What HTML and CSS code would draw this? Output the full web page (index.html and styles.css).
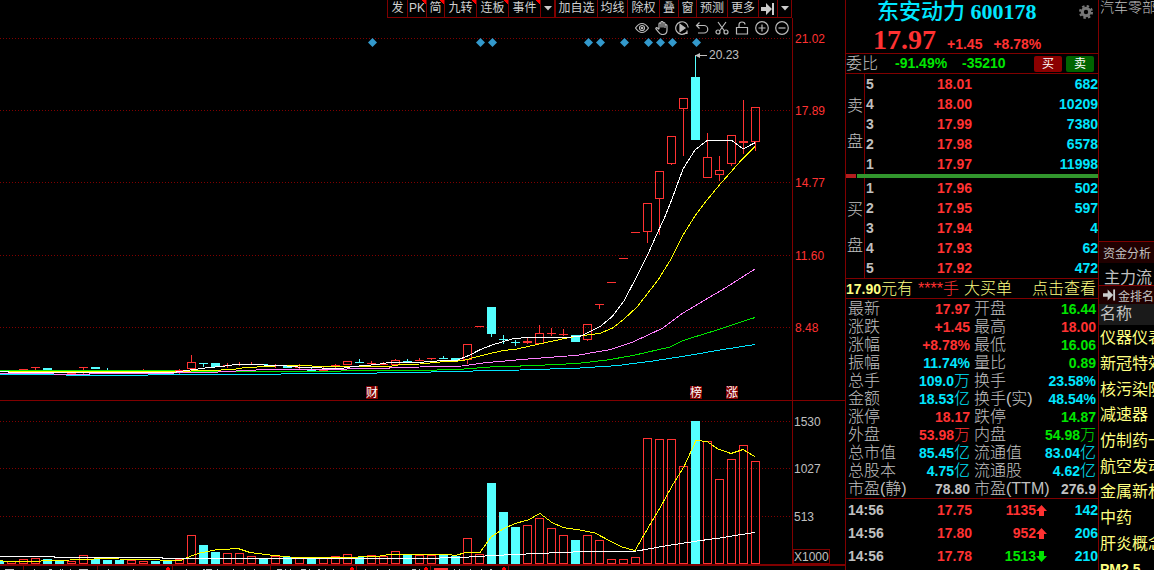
FILE: index.html
```html
<!DOCTYPE html>
<html lang="zh-CN">
<head>
<meta charset="utf-8">
<title>东安动力 600178</title>
<link rel="stylesheet" href="styles.css">
</head>
<body>
<main class="app">
  <section class="chart">
    <nav class="toolbar">
      <button>发</button><button class="hot">PK</button><button class="hot">简</button><button class="hot">九转</button><button class="hot">连板</button><button class="hot">事件</button><button aria-label="事件菜单"><svg width="8" height="5" viewBox="0 0 8 5"><path d="M0 0h8L4 4.500z" fill="#ccc"/></svg></button><button class="group">加自选</button><button>均线</button><button>除权</button><button>叠</button><button>窗</button><button>预测</button><button>更多</button><button aria-label="收起"><svg width="14" height="12" viewBox="0 0 14 12" fill="#ccc"><path d="M0 4h5V0l6 6-6 6V8H0z"/><path d="M11 0h2v12h-2z"/></svg></button><button aria-label="菜单"><svg width="8" height="5" viewBox="0 0 8 5"><path d="M0 0h8L4 4.500z" fill="#ccc"/></svg></button>
    </nav>
    <div class="tools">
      <button aria-label="显示"><svg viewBox="0 0 14 14"><path d="M.5 7Q3.500 2.500 7 2.500T13.500 7Q10.500 11.500 7 11.500T.5 7z"/><circle cx="7" cy="7" r="2.500"/><circle cx="7" cy="7" r=".6"/></svg></button>
      <button aria-label="拖动"><svg viewBox="0 0 14 14"><path d="M4 8V3q0-1.200 1-1.200t1 1.200V6.500V1.700q0-1.200 1-1.200t1 1.200V6.500V2.700q0-1.200 1-1.200t1 1.200V7V4.700q0-1 1-1t1 1V9q0 4.500-4.500 4.500Q5 13.500 3.500 11L1 8q-.5-1 .5-1.400Q2.500 6.500 4 8.500"/></svg></button>
      <button aria-label="播放"><svg viewBox="0 0 14 14"><path d="M11.500 11.500A6.300 6.300 0 1 1 13.300 6.500M8.500 12.500h3.500V9.500"/><path d="M5 3.500v7L10 7z" fill="#bbb"/></svg></button>
      <button aria-label="撤销"><svg viewBox="0 0 14 14"><path d="M4.500 1.500l-3 3 3 3M1.500 4.500H9a3.700 3.700 0 0 1 0 7.500H3"/></svg></button>
      <button aria-label="剪切"><svg viewBox="0 0 14 14"><path d="M3 1l6.500 9M11 1L4.500 10"/><circle cx="3" cy="11" r="2"/><circle cx="11" cy="11" r="2"/></svg></button>
      <button aria-label="锁定"><svg viewBox="0 0 14 14"><path d="M1.500 6.500h11v6.500h-11zM4 6.500V4q0-3 3-3t3 2.500"/></svg></button>
      <button aria-label="放大"><svg viewBox="0 0 14 14"><circle cx="7" cy="7" r="6.300"/><path d="M3.500 7h7M7 3.500v7"/></svg></button>
      <button aria-label="缩小"><svg viewBox="0 0 14 14"><circle cx="7" cy="7" r="6.300"/><path d="M3.500 7h7"/></svg></button>
    </div>
    <svg class="plot" id="plot" viewBox="0 38 845 532" role="img" aria-label="日K线与成交量"></svg>
  </section>

  <section class="quote">
    <header class="head">
      <h1>东安动力 <span>600178</span></h1>
      <button class="gear" aria-label="设置"><svg width="14" height="14" viewBox="0 0 14 14"><circle cx="7" cy="7" r="3.700" fill="none" stroke="#777" stroke-width="3"/><circle cx="7" cy="7" r="5.900" fill="none" stroke="#777" stroke-width="2.200" stroke-dasharray="2.400 2.234"/></svg></button>
      <p class="price"><strong>17.97</strong><span>+1.45</span><span>+8.78%</span></p>
    </header>
    <div class="ratio"><span class="zh">委比</span><b class="down">-91.49%</b><b class="down">-35210</b><button class="buy">买</button><button class="sell">卖</button></div>
    <div class="book">
      <div class="side"><span>卖</span><span>盘</span></div>
      <table>
        <tr><th>5</th><td>18.01</td><td>682</td></tr>
        <tr><th>4</th><td>18.00</td><td>10209</td></tr>
        <tr><th>3</th><td>17.99</td><td>7380</td></tr>
        <tr><th>2</th><td>17.98</td><td>6578</td></tr>
        <tr><th>1</th><td>17.97</td><td>11998</td></tr>
      </table>
    </div>
    <div class="balance"><i></i></div>
    <div class="book">
      <div class="side"><span>买</span><span>盘</span></div>
      <table>
        <tr><th>1</th><td>17.96</td><td>502</td></tr>
        <tr><th>2</th><td>17.95</td><td>597</td></tr>
        <tr><th>3</th><td>17.94</td><td>4</td></tr>
        <tr><th>4</th><td>17.93</td><td>62</td></tr>
        <tr><th>5</th><td>17.92</td><td>472</td></tr>
      </table>
    </div>
    <div class="notice"><span><b>17.90</b>元有</span><span class="up">****手</span><span>大买单</span><a href="#">点击查看</a></div>
    <dl class="stats">
      <dt>最新</dt><dd class="up">17.97</dd><dt>开盘</dt><dd class="down">16.44</dd>
      <dt>涨跌</dt><dd class="up">+1.45</dd><dt>最高</dt><dd class="up">18.00</dd>
      <dt>涨幅</dt><dd class="up">+8.78%</dd><dt>最低</dt><dd class="down">16.06</dd>
      <dt>振幅</dt><dd class="vol">11.74%</dd><dt>量比</dt><dd class="down">0.89</dd>
      <dt>总手</dt><dd class="vol">109.0<i>万</i></dd><dt>换手</dt><dd class="vol">23.58%</dd>
      <dt>金额</dt><dd class="vol">18.53<i>亿</i></dd><dt>换手(实)</dt><dd class="vol">48.54%</dd>
      <dt>涨停</dt><dd class="up">18.17</dd><dt>跌停</dt><dd class="down">14.87</dd>
      <dt>外盘</dt><dd class="up">53.98<i>万</i></dd><dt>内盘</dt><dd class="down">54.98<i>万</i></dd>
      <dt>总市值</dt><dd class="vol">85.45<i>亿</i></dd><dt>流通值</dt><dd class="vol">83.04<i>亿</i></dd>
      <dt>总股本</dt><dd class="vol">4.75<i>亿</i></dd><dt>流通股</dt><dd class="vol">4.62<i>亿</i></dd>
      <dt>市盈(静)</dt><dd>78.80</dd><dt>市盈(TTM)</dt><dd>276.9</dd>
    </dl>
    <table class="ticks">
      <tr><td>14:56</td><td class="up">17.75</td><td class="up">1135<svg width="11" height="11" viewBox="0 0 11 11"><path d="M5.500 0L11 6H8v5H3V6H0z" fill="#ff3232"/></svg></td><td class="vol">142</td></tr>
      <tr><td>14:56</td><td class="up">17.80</td><td class="up">952<svg width="11" height="11" viewBox="0 0 11 11"><path d="M5.500 0L11 6H8v5H3V6H0z" fill="#ff3232"/></svg></td><td class="vol">206</td></tr>
      <tr><td>14:56</td><td class="up">17.78</td><td class="down">1513<svg width="11" height="11" viewBox="0 0 11 11"><path d="M5.500 11L0 5h3V0h5v5h3z" fill="#00e600"/></svg></td><td class="vol">210</td></tr>
    </table>
  </section>

  <aside class="sector">
    <h2>汽车零部</h2>
    <button class="tab">资金分析</button>
    <p class="flow">主力流</p>
    <button class="tab rank"><svg width="14" height="12" viewBox="0 0 14 12" fill="#ccc"><path d="M0 4h5V0l6 6-6 6V8H0z"/><path d="M11 0h2v12h-2z"/></svg>金排名</button>
    <p class="name">名称</p>
    <ul>
      <li>仪器仪表</li><li>新冠特效</li><li>核污染防</li><li>减速器</li><li>仿制药一</li><li>航空发动</li><li>金属新材</li><li>中药</li><li>肝炎概念</li><li><b>PM2.5</b></li>
    </ul>
  </aside>
</main>
<script src="chart.js"></script>
</body>
</html>
```

FILE: styles.css
```css
* { box-sizing: border-box; }
body {
  margin: 0;
  background: #000;
  color: #c0c0c0;
  font-family: "Liberation Sans", "Noto Sans CJK SC", sans-serif;
  font-size: 14px;
}
h1, h2, p, dl, dd, ul { margin: 0; padding: 0; font-weight: 400; }
i { font-style: normal; }
b { font-weight: 700; }
button { font: inherit; color: inherit; background: none; border: 0; padding: 0; }
table { border-collapse: collapse; }
th, td { padding: 0; font-weight: 700; }

.app {
  display: grid;
  grid-template-columns: minmax(0, 1fr) 254px 55px;
  height: 100vh;
  min-height: 570px;
  overflow: hidden;
}

.chart { display: flex; flex-direction: column; }
.toolbar {
  display: grid;
  grid-template-columns: 20px 19px 18px 32px 32px 32px 14px 43px 30px 32px 19px 18px 31px 31px 19px 15px;
  align-self: flex-end;
  height: 18px;
  margin-right: 53px;
  border-bottom: 1px solid #800000;
  color: #d0d0d0;
  font-size: 12px;
  line-height: 17px;
}
.toolbar button {
  display: flex;
  align-items: center;
  justify-content: center;
  border-left: 1px solid #800000;
  white-space: nowrap;
}
.toolbar button:last-child { border-right: 1px solid #800000; }
.toolbar .group { border-left-width: 2px; }
.toolbar .hot { background: linear-gradient(45deg, transparent 50%, #ff0000 50%) top right / 4px 4px no-repeat; }
.tools {
  display: flex;
  justify-content: flex-end;
  align-items: center;
  gap: 6px;
  height: 20px;
  padding-right: 56px;
}
.tools button { width: 14px; height: 14px; }
.tools svg { display: block; width: 14px; height: 14px; fill: none; stroke: #bbb; stroke-width: 1.2; }
.plot { display: block; width: 100%; overflow: visible; }
.plot text { font-size: 12px; fill: #c0c0c0; }
.plot .axis { fill: #ff3232; }
.plot .mark { font-size: 12px; fill: #fff; text-anchor: middle; }

.quote {
  display: flex;
  flex-direction: column;
  background: #000;
  border-left: 1px solid #800000;
  border-right: 1px solid #800000;
  white-space: nowrap;
}
.up { color: #ff3232; }
.down { color: #00e600; }
.vol { color: #00e6ff; }
.head {
  display: grid;
  grid-template-columns: 1fr 19px;
  grid-template-rows: 24px 29px;
  border-bottom: 1px solid #800000;
}
.head h1 {
  padding-left: 31px;
  color: #00e6ff;
  font-family: "Liberation Serif", "Noto Sans CJK SC", serif;
  font-size: 22px;
  font-weight: 500;
  line-height: 24px;
}
.head h1 span { font-weight: 700; }
.gear { display: flex; align-items: center; }
.price {
  display: flex;
  align-items: baseline;
  gap: 11px;
  padding-left: 27px;
  color: #ff3232;
  font-weight: 700;
  line-height: 32px;
}
.price strong { font-family: "Liberation Serif", serif; font-size: 28px; line-height: 32px; }
.ratio {
  display: grid;
  grid-template-columns: 49px 67px 72px 28px 28px;
  height: 20px;
  border-bottom: 1px solid #800000;
  line-height: 19px;
  align-items: center;
}
.ratio .zh { font-size: 16px; font-weight: 300; }
.ratio button { height: 16px; border-radius: 2px; color: #fff; font-size: 12px; line-height: 16px; }
.ratio .sell { margin-left: 4px; margin-right: -4px; }
.buy { background: #8b0000; }
.sell { background: #006400; }
.book { display: flex; height: 100px; }
.side {
  display: flex;
  flex-direction: column;
  justify-content: center;
  gap: 12px;
  width: 19px;
  border-right: 1px solid #800000;
  font-size: 16px;
  font-weight: 300;
  line-height: 24px;
  padding-left: 1px;
}
.book table { flex: 1; height: 100px; line-height: 20px; }
.book th { width: 20px; padding-left: 1px; text-align: left; }
.book td { width: 87px; text-align: right; color: #ff3232; }
.book td:last-child { width: auto; color: #00e6ff; }
.balance { height: 4px; background: #32962d; }
.balance i { display: block; width: 11px; height: 4px; background: #b41e1e; border-right: 1px solid #000; }
.notice {
  display: flex;
  gap: 5px;
  height: 21px;
  border-top: 1px solid #800000;
  border-bottom: 1px solid #800000;
  color: #ffff80;
  font-size: 16px;
  font-weight: 300;
  line-height: 19px;
}
.notice b { font-size: 14px; }
.notice .up { color: #ff3232; }
.notice a { margin-left: auto; padding-right: 2px; color: inherit; text-decoration: none; }
.stats {
  display: grid;
  grid-template-columns: 58px 64px 70px 1fr;
  grid-auto-rows: 18px;
  padding: 1px 2px 0;
  line-height: 18px;
  border-bottom: 1px solid #800000;
}
.stats dt { font-size: 16px; font-weight: 300; }
.stats dd { display: flex; justify-content: flex-end; font-weight: 700; }
.stats dt:nth-of-type(even) { padding-left: 4px; }
.stats dd i { font-size: 16px; font-weight: 300; }
.ticks { width: 100%; line-height: 23px; }
.ticks tr { height: 23px; }
.ticks td { text-align: right; }
.ticks td:nth-child(1) { width: 38px; padding-left: 2px; text-align: left; }
.ticks td:nth-child(2) { width: 88px; }
.ticks td:nth-child(3) { width: 75px; }
.ticks svg { vertical-align: -1px; }

.sector { overflow: hidden; white-space: nowrap; font-weight: 300; }
.sector h2 { height: 242px; border-bottom: 1px solid #800000; padding-left: 1px; font-size: 14px; font-weight: 300; line-height: 14px; }
.tab {
  display: flex;
  align-items: center;
  gap: 2px;
  width: 100%;
  height: 21px;
  padding-left: 4px;
  background: #200000;
  font-size: 12px;
  font-weight: 400;
}
.flow { height: 22px; padding: 6px 0 0 5px; font-size: 16px; line-height: 18px; overflow: hidden; }
.rank { height: 19px; border-top: 1px solid #800000; }
.name { height: 21px; padding-left: 1px; background: #1a1a1a; font-size: 16px; line-height: 20px; }
.sector ul {
  display: grid;
  grid-auto-rows: 26px 26px 25px;
  padding-left: 1px;
  list-style: none;
  color: #ffff80;
  font-size: 16px;
  line-height: 26px;
}
.sector b { font-size: 14px; }
```

FILE: chart.js
```js
const RED = '#ff3232', CYAN = '#54ffff', LINE = '#800000';
const plot = document.getElementById('plot');
const out = [];
const center = i => 11.5 + 12 * i;

const rect = (x, y, w, h, fill, stroke) =>
  out.push(`<rect x="${x}" y="${y}" width="${w}" height="${h}" fill="${fill}"${stroke ? ` stroke="${stroke}"` : ''}/>`);
const seg = (x1, y1, x2, y2, color, dash) =>
  out.push(`<line x1="${x1}" y1="${y1}" x2="${x2}" y2="${y2}" stroke="${color}"${dash ? ' stroke-dasharray="1 2"' : ''}/>`);
const text = (x, y, s, cls) => out.push(`<text x="${x}" y="${y}" class="${cls || ''}">${s}</text>`);

out.push('<g shape-rendering="crispEdges">');
[38.5, 110.5, 182.5, 255.5, 327.5, 421.5, 468.5, 516.5].forEach(y => seg(0, y, 792, y, LINE, true));
seg(792.5, 18, 792.5, 564, LINE);
seg(0, 400.5, 845, 400.5, LINE);
rect(0, 564, 845, 2, LINE);
rect(793.5, 549.5, 36, 14, 'none', LINE);

/* index, colour, high, body top, body bottom, low */
const candles = [
  [1,'r',369,369,369,370],[2,'r',367,367,367,370],[3,'c',368,368,370,370],[4,'c',372,372,373,374],
  [5,'r',372,373,373,374],[6,'r',367,367,367,374],[7,'c',367,367,369,370],[8,'c',368,371,371,371],
  [9,'c',371,371,373,373],[10,'r',371,371,371,373],[11,'r',369,371,371,371],[14,'r',369,370,370,374],
  [15,'r',355,362,368,369],[16,'c',363,363,363,367],[17,'c',363,363,367,367],[18,'r',363,365,365,368],
  [19,'r',362,364,364,366],[20,'r',362,364,364,364],[21,'c',364,364,365,366],[22,'r',364,365,365,368],
  [23,'c',366,366,368,369],[24,'r',364,367,367,369],[25,'c',367,369,371,371],[26,'r',366,370,370,371],
  [27,'r',364,365,365,368],[28,'r',361,361,364,365],[29,'c',359,362,362,362],[30,'r',361,363,363,364],
  [31,'r',362,364,364,364],[32,'r',359,360,364,364],[33,'c',359,361,361,362],[34,'r',358,360,360,361],
  [35,'r',358,358,358,360],[36,'c',356,358,358,359],[37,'c',358,358,361,361],[38,'r',344,344,359,364],
  [39,'r',326,326,326,327],[40,'c',307,307,334,337],[41,'c',335,339,339,344],[42,'c',340,342,342,346],
  [43,'r',338,341,342,344],[44,'r',325,333,343,344],[45,'r',328,333,333,336],[46,'r',329,334,334,336],
  [47,'c',335,335,342,342],[48,'r',324,324,339,341],[49,'r',304,304,304,309],[50,'r',282,282,282,283],
  [51,'r',258,258,258,259],[52,'r',232,232,232,233],[53,'r',203,203,231,243],[54,'r',171,171,198,235],
  [55,'r',136,136,163,165],[56,'r',98,98,108,156],[57,'c',55,77,140,140],[58,'r',133,157,177,178],
  [59,'r',156,170,174,181],[60,'r',135,135,163,166],[61,'r',100,141,142,154],[62,'r',107,107,141,151]
];
candles.forEach(([i, c, high, top, bottom, low]) => {
  const x = center(i), color = c === 'r' ? RED : CYAN;
  if (high < top) seg(x, high, x, top, color);
  if (low > bottom + 1) seg(x, bottom, x, low, color);
  if (c === 'c') rect(x - 4.5, top, 9, Math.max(1, bottom - top), color);
  else if (bottom - top < 2) rect(x - 4.5, top, 9, bottom - top + 1, color);
  else rect(x - 4, top + .5, 8, bottom - top, 'none', color);
});

const volumes = '561c 561r 559r 558r 559c 560c 561r 555r 559c 560c 560c 560r 561r 561c 561c 559r 535r 545c 552c 553r 553r 556r 558c 556r 557c 558r 558c 558r 556r 554r 557c 555r 556r 551r 555c 555r 555r 555c 556c 538r 554r 483c 512c 527c 525r 518r 528r 535r 540c 535r 540r 559r 559r 557r 438r 439r 439r 466r 421c 441r 479r 459r 445r 461r'.split(' ');
volumes.forEach((v, n) => {
  const x = center(n - 1), y = parseInt(v, 10);
  if (v.endsWith('c')) rect(x - 4.5, y, 9, 564 - y, CYAN);
  else rect(x - 4, y + .5, 8, 563 - y, 'none', RED);
});

const lines = {
  '#00e6ff': ['0,374.5 66,374.5 67,375.5 137,375.5 160,374.5 280,374.5 282,373.5 376,373.5 378,372.5 420,372.3 450,371.5 520,370 580,368 617,365.6 653,361 687,355.7 720,350 755,344.5'],
  '#00e600': ['0,370.5 174,370.5 175,371.5 340,371.5 342,370.5 420,370.5 460,369.3 490,367 533,365.6 577,363.5 607,360 633,355.5 670,347 683,340.5 717,330 755,317.5'],
  '#ff80ff': ['0,373.5 42,373.5 66,374.5 89,374.5 90,373.5 173,373.5 175,372.5 209,372.5 245,370.5 268,369.5 341,369.5 353,368.5 389,368.5 390,367.5 420,367 462,366 487,362.5 533,358.6 577,355.3 610,349.7 633,342 663,328 683,313 707,298.7 722,290 755,269'],
  '#ffff00': ['0,371.5 173,371.5 209,370.5 233,369.5 245,367.5 269,366.5 281,365.5 306,365.5 318,366.5 389,366.5 401,364.5 420,364 440,362 463,360.7 473,357.7 502,350.7 517,349 545,342.7 567,338 580,336 600,333.3 612,328.3 623,320 637,307 658,280 670,260.700 682,236.7 695,216 707,200 720,184.300 732,170.7 743,158.3 755,146.7',
    '0,560.5 6,561.5 30,561.5 52,560.5 88,559.5 100,558.5 138,559.5 181,560.5 190,556.500 200,553 215,550 238,548.5 250,552.5 270,555 290,557 340,557.5 377,556.5 389,554.5 448,554.5 455,555.5 466,552.5 480,552.5 491,537 503,529 515,523.5 528,520 540,513.5 552,522.5 563,527.5 580,530 595,533 610,541 622,547 635,550.5 648,528 660,508 672,486 684,466.7 696,440.3 707,441.5 718,449 731,453.500 743,449.5 755,456.7'],
  '#ffffff': ['0,371.5 17,372.5 173,372.5 194,369.5 209,367.5 221,366.5 236,364.5 246,364.5 281,365.5 303,367.5 341,368.5 353,366.5 377,364.5 389,362.5 420,362.3 437,361 457,360.3 470,355 480,349.7 493,344.7 512,339 527,337.3 547,338 567,337.3 580,336.3 600,326.7 612,316.7 624,300.7 635,280 648,254 658,231.7 664,219 672,199 683,169 695,150 707,140.5 732,140.5 743,149 755,142.7',
    '0,556.5 54,556.5 55,557.5 162,557.5 163,558.5 420,558.5 461,557.5 485,556 510,554.7 580,551.7 637,551 665,546 697,541 722,537.7 755,532.3']
};
Object.entries(lines).forEach(([color, sets]) =>
  sets.forEach(points => out.push(`<polyline points="${points}" fill="none" stroke="${color}"/>`)));

/* strip under the volume pane */
[23, 97, 172, 270, 356, 430, 508].forEach(x => seg(x + .5, 565, x + .5, 570, LINE));
[168, 352, 426, 504].forEach(x => { rect(x - 2, 568, 4, 2, '#ff0000'); rect(x - 1, 567, 2, 1, '#ff0000'); });
rect(434, 568, 14, 2, RED);
[[5, 9], [34, 1], [49, 3], [60, 1], [62, 1], [70, 1], [79, 9], [108, 1], [133, 1], [186, 1], [203, 2], [206, 6], [217, 1], [233, 1], [244, 1], [254, 1], [277, 5], [285, 1], [290, 1], [301, 5], [309, 1], [318, 2], [325, 1], [333, 1], [365, 1], [377, 1], [389, 1], [412, 4], [419, 1], [454, 1], [459, 1], [470, 1], [481, 1], [490, 2]]
  .forEach(([x, w]) => rect(x, 569, w, 1, '#c0c0c0'));
seg(695, 55.5, 707, 55.500, '#c0c0c0');
out.push('</g>');

out.push('<path d="M695 55.500l5-2.500v5z" fill="#c0c0c0"/>');
[372, 480, 492, 588, 600, 624, 648, 660, 672, 696].forEach(x =>
  out.push(`<path d="M${x + .5} 38l4.500 4.500-4.500 4.500-4.500-4.500z" fill="#3399cc"/>`));
[[366, '财'], [690, '榜'], [726, '涨']].forEach(([x, s]) => {
  rect(x, 386, 12, 13, LINE);
  text(x + 6, 397, s, 'mark');
});
[[43, '21.02'], [115, '17.89'], [187, '14.77'], [260, '11.60'], [332, '8.48']].forEach(([y, s]) => text(795, y, s, 'axis'));
[[426, '1530'], [473, '1027'], [521, '513'], [561, 'X1000']].forEach(([y, s]) => text(794, y, s));
text(709, 59, '20.23');
plot.innerHTML = out.join('');
```
